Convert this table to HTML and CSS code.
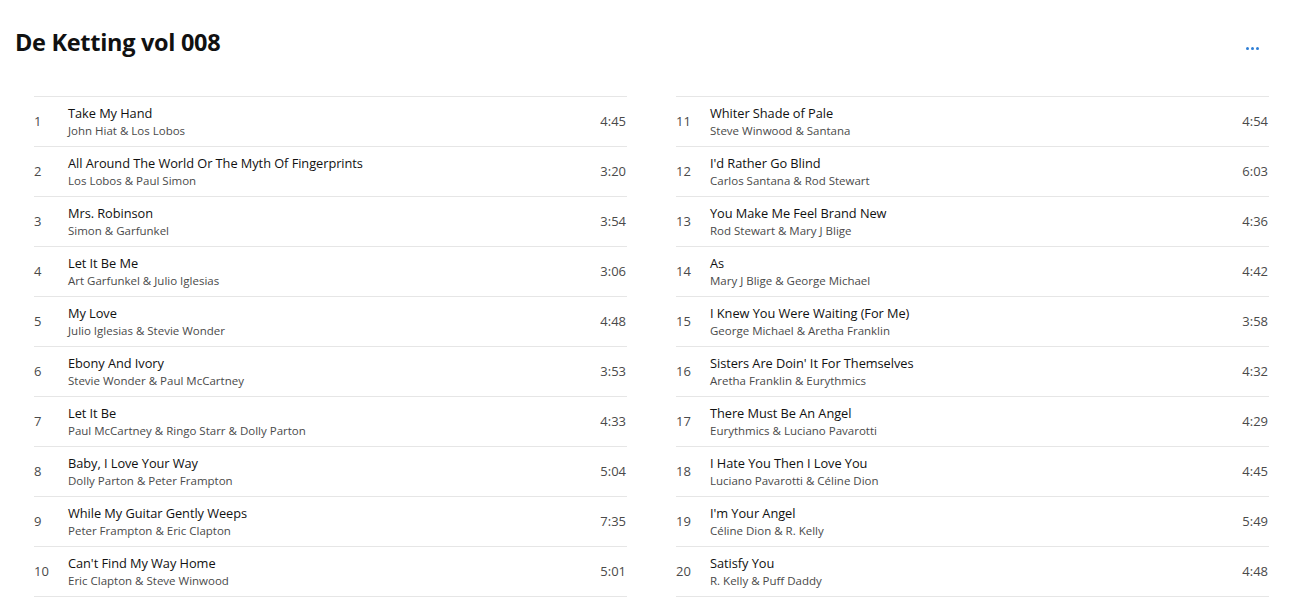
FILE: index.html
```html
<!DOCTYPE html>
<html>
<head>
<meta charset="utf-8">
<link rel="stylesheet" href="styles.css">
</head>
<body>
<div class="page">
  <header class="header">
    <h1 class="title">De Ketting vol 008</h1>
    <button class="more" aria-label="More"><span></span><span></span><span></span></button>
  </header>
  <div class="columns">
    <ol class="tracks">
      <li class="track"><span class="num">1</span><div class="info"><div class="name">Take My Hand</div><div class="artist">John Hiat &amp; Los Lobos</div></div><span class="dur">4:45</span></li>
      <li class="track"><span class="num">2</span><div class="info"><div class="name">All Around The World Or The Myth Of Fingerprints</div><div class="artist">Los Lobos &amp; Paul Simon</div></div><span class="dur">3:20</span></li>
      <li class="track"><span class="num">3</span><div class="info"><div class="name">Mrs. Robinson</div><div class="artist">Simon &amp; Garfunkel</div></div><span class="dur">3:54</span></li>
      <li class="track"><span class="num">4</span><div class="info"><div class="name">Let It Be Me</div><div class="artist">Art Garfunkel &amp; Julio Iglesias</div></div><span class="dur">3:06</span></li>
      <li class="track"><span class="num">5</span><div class="info"><div class="name">My Love</div><div class="artist">Julio Iglesias &amp; Stevie Wonder</div></div><span class="dur">4:48</span></li>
      <li class="track"><span class="num">6</span><div class="info"><div class="name">Ebony And Ivory</div><div class="artist">Stevie Wonder &amp; Paul McCartney</div></div><span class="dur">3:53</span></li>
      <li class="track"><span class="num">7</span><div class="info"><div class="name">Let It Be</div><div class="artist">Paul McCartney &amp; Ringo Starr &amp; Dolly Parton</div></div><span class="dur">4:33</span></li>
      <li class="track"><span class="num">8</span><div class="info"><div class="name">Baby, I Love Your Way</div><div class="artist">Dolly Parton &amp; Peter Frampton</div></div><span class="dur">5:04</span></li>
      <li class="track"><span class="num">9</span><div class="info"><div class="name">While My Guitar Gently Weeps</div><div class="artist">Peter Frampton &amp; Eric Clapton</div></div><span class="dur">7:35</span></li>
      <li class="track"><span class="num">10</span><div class="info"><div class="name">Can't Find My Way Home</div><div class="artist">Eric Clapton &amp; Steve Winwood</div></div><span class="dur">5:01</span></li>
    </ol>
    <ol class="tracks">
      <li class="track"><span class="num">11</span><div class="info"><div class="name">Whiter Shade of Pale</div><div class="artist">Steve Winwood &amp; Santana</div></div><span class="dur">4:54</span></li>
      <li class="track"><span class="num">12</span><div class="info"><div class="name">I'd Rather Go Blind</div><div class="artist">Carlos Santana &amp; Rod Stewart</div></div><span class="dur">6:03</span></li>
      <li class="track"><span class="num">13</span><div class="info"><div class="name">You Make Me Feel Brand New</div><div class="artist">Rod Stewart &amp; Mary J Blige</div></div><span class="dur">4:36</span></li>
      <li class="track"><span class="num">14</span><div class="info"><div class="name">As</div><div class="artist">Mary J Blige &amp; George Michael</div></div><span class="dur">4:42</span></li>
      <li class="track"><span class="num">15</span><div class="info"><div class="name">I Knew You Were Waiting (For Me)</div><div class="artist">George Michael &amp; Aretha Franklin</div></div><span class="dur">3:58</span></li>
      <li class="track"><span class="num">16</span><div class="info"><div class="name">Sisters Are Doin' It For Themselves</div><div class="artist">Aretha Franklin &amp; Eurythmics</div></div><span class="dur">4:32</span></li>
      <li class="track"><span class="num">17</span><div class="info"><div class="name">There Must Be An Angel</div><div class="artist">Eurythmics &amp; Luciano Pavarotti</div></div><span class="dur">4:29</span></li>
      <li class="track"><span class="num">18</span><div class="info"><div class="name">I Hate You Then I Love You</div><div class="artist">Luciano Pavarotti &amp; Céline Dion</div></div><span class="dur">4:45</span></li>
      <li class="track"><span class="num">19</span><div class="info"><div class="name">I'm Your Angel</div><div class="artist">Céline Dion &amp; R. Kelly</div></div><span class="dur">5:49</span></li>
      <li class="track"><span class="num">20</span><div class="info"><div class="name">Satisfy You</div><div class="artist">R. Kelly &amp; Puff Daddy</div></div><span class="dur">4:48</span></li>
    </ol>
  </div>
</div>
</body>
</html>
```
FILE: styles.css
```css
* { box-sizing: border-box; }
html, body { margin: 0; padding: 0; background: #fff; }
body {
  font-family: "Open Sans", "Noto Sans", "Liberation Sans", sans-serif;
  color: #1a1a1a;
}
.page {
  padding: 26px 22px 0 15px;
}
.header {
  display: flex;
  justify-content: space-between;
  align-items: flex-start;
  height: 70px;
}
.title {
  margin: 0;
  font-size: 23.5px;
  font-weight: 700;
  line-height: 32px;
  color: #111;
  letter-spacing: -0.3px;
}
.more {
  border: 0;
  background: none;
  padding: 0;
  margin: 21px 9px 0 0;
  display: flex;
  gap: 2px;
  cursor: pointer;
}
.more span {
  width: 3px;
  height: 3px;
  border-radius: 50%;
  background: #2f7fd6;
}
.columns {
  display: grid;
  grid-template-columns: 593px 593px;
  column-gap: 49px;
  margin-left: 19px;
}
.tracks {
  list-style: none;
  margin: 0;
  padding: 0;
  border-top: 1px solid #e6e6e6;
}
.track {
  display: flex;
  align-items: center;
  height: 50px;
  border-bottom: 1px solid #e6e6e6;
}
.num {
  width: 34px;
  font-size: 13px;
  color: #4a4a4a;
  padding-bottom: 2px;
}
.info {
  flex: 1;
  display: flex;
  flex-direction: column;
  gap: 1px;
  padding-top: 1px;
}
.name {
  font-size: 12.8px;
  line-height: 17px;
  color: #111;
  letter-spacing: -0.05px;
}
.artist {
  font-size: 11.5px;
  line-height: 16px;
  color: #4a4a4a;
}
.dur {
  font-size: 13px;
  color: #4a4a4a;
  padding-right: 1px;
  padding-bottom: 2px;
}
```
